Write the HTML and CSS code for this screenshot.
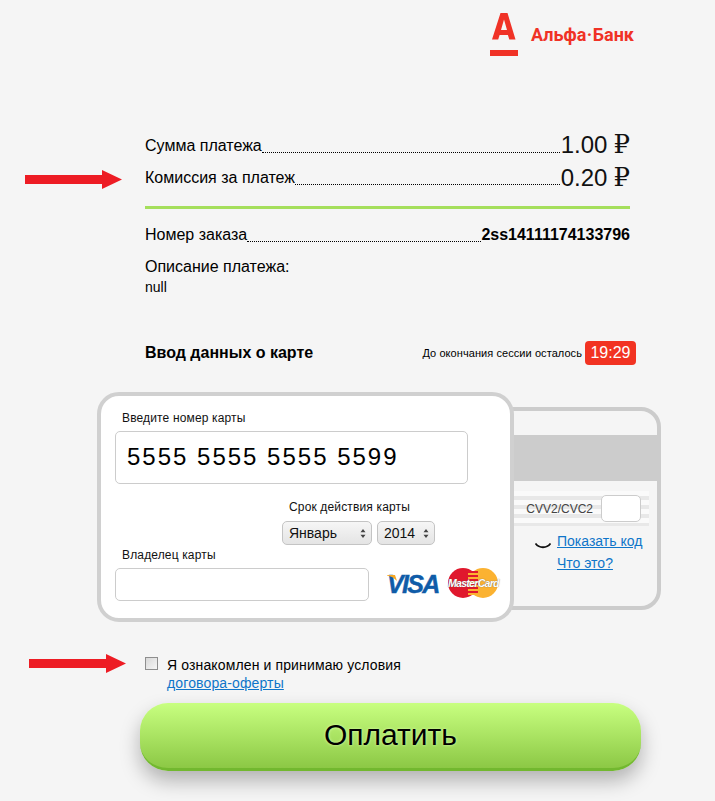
FILE: index.html
```html
<!DOCTYPE html>
<html lang="ru">
<head>
<meta charset="utf-8">
<title>Альфа-Банк</title>
<link rel="stylesheet" href="styles.css">
</head>
<body>
<div class="page">
  <header class="brand">
    <svg class="brand-mark" width="28" height="43" viewBox="0 0 28 43"><path fill="#f03226" d="M10.500 0h7l8 26.500h-6.200l-1.400-4.500H9.600l-1.400 4.500H2zM11 17h6L14 6.500z"/><rect y="37" width="28" height="6" fill="#f03226"/></svg>
    <span class="brand-name">Альфа<span class="brand-dot">·</span>Банк</span>
  </header>

  <section class="summary">
    <div class="row row-amount"><span>Сумма платежа</span><i class="leader"></i><span class="amount">1.00<span class="rub">₽</span></span></div>
    <div class="row row-amount row-fee"><span>Комиссия за платеж</span><i class="leader"></i><span class="amount">0.20<span class="rub">₽</span></span></div>
    <hr class="divider">
    <div class="row row-order"><span>Номер заказа</span><i class="leader"></i><b>2ss14111174133796</b></div>
    <div class="desc-title">Описание платежа:</div>
    <div class="desc-value">null</div>
  </section>

  <section class="card-head">
    <h2>Ввод данных о карте</h2>
    <span class="timer-label">До окончания сессии осталось</span>
    <span class="timer">19:29</span>
  </section>

  <section class="cards">
    <div class="card-front">
      <label class="field-label">Введите номер карты</label>
      <div class="number-input">5555 5555 5555 5599</div>
      <div class="expiry">
        <div class="field-label">Срок действия карты</div>
        <div class="selects">
          <div class="select select-month">Январь<svg width="6" height="9" viewBox="0 0 6 9"><path fill="#444" d="M3 0l2.500 3.300h-5zM3 9L.5 5.700h5z"/></svg></div>
          <div class="select select-year">2014<svg width="6" height="9" viewBox="0 0 6 9"><path fill="#444" d="M3 0l2.500 3.300h-5zM3 9L.5 5.700h5z"/></svg></div>
        </div>
      </div>
      <div class="owner">
        <div class="owner-field">
          <label class="field-label">Владелец карты</label>
          <div class="owner-input"></div>
        </div>
        <div class="visa"><svg class="visa-flag" width="10" height="6" viewBox="0 0 10 6"><path fill="#f5a623" d="M0 0h8l2 6C7 3 4 1.200 0 .6z"/></svg>VISA</div>
        <div class="mc">
          <i class="mc-red"></i><i class="mc-yellow"></i><i class="mc-stripes"></i>
          <span class="mc-text">MasterCard</span>
        </div>
      </div>
    </div>
    <div class="card-back">
      <div class="band"></div>
      <div class="cvv-strip"><span>CVV2/CVC2</span><div class="cvv-input"></div></div>
      <div class="links">
        <svg class="smile" width="16" height="8" viewBox="0 0 16 8"><path d="M.5 1.500C4 6.500 12 6.500 15.500 1.500" fill="none" stroke="#111" stroke-width="1.800"/></svg>
        <div class="link-col">
          <a href="#">Показать код</a>
          <a href="#">Что это?</a>
        </div>
      </div>
    </div>
  </section>

  <section class="agree">
    <span class="check"></span>
    <div class="agree-text">Я ознакомлен и принимаю условия<br><a href="#">договора-оферты</a></div>
  </section>

  <button class="pay">Оплатить</button>

  <svg class="arrow arrow-fee" width="97" height="19" viewBox="0 0 97 19"><path fill="#ed1c24" d="M0 5h77V0l20 9.500L77 19v-5H0z"/></svg>
  <svg class="arrow arrow-agree" width="97" height="19" viewBox="0 0 97 19"><path fill="#ed1c24" d="M0 5h77V0l20 9.500L77 19v-5H0z"/></svg>
</div>
</body>
</html>
```

FILE: styles.css
```css
* { box-sizing: border-box; }
html, body { margin: 0; padding: 0; height: 100%; }
body {
  background: #f5f5f5;
  color: #000;
  font-family: "Liberation Sans", Arial, sans-serif;
  overflow: hidden;
}
a { color: #0f75c9; }
.page { position: relative; width: 715px; height: 801px; }

.brand {
  display: flex;
  align-items: flex-start;
  padding: 13px 0 0 490px;
  height: 125px;
}
.brand-mark { flex: none; }
.brand-name {
  margin: 12px 0 0 13px;
  color: #f03226;
  font-size: 18px;
  line-height: 20px;
  font-weight: 700;
  font-family: "Liberation Sans Narrow", "Roboto", sans-serif;
  white-space: nowrap;
}
.brand-dot { margin: 0 .5px; }

.summary { margin: 0 85px 0 145px; }
.row { display: flex; align-items: flex-end; font-size: 16px; }
.row > span:first-child { margin-bottom: 1px; }
.leader {
  flex: 1;
  border-bottom: 1px dotted #000;
  margin: 0 1px 4px 0;
}
.row-amount { height: 32px; line-height: 20px; }
.amount {
  display: flex;
  align-items: baseline;
  margin-bottom: -2px;
  font-size: 24px;
  line-height: 28px;
  color: #111;
}
.row-fee .amount { margin-bottom: -3px; }
.rub { margin-left: 6px; font-family: "Liberation Serif", "DejaVu Serif", serif; font-size: 26px; line-height: 28px; }
.divider { height: 3px; border: 0; margin: 17px 0 0; background: #a5df5c; }
.row-order { margin-top: 16px; line-height: 20px; }
.row-order b { margin-bottom: 1px; }
.row-order .leader { margin-right: 0; }
.desc-title { margin-top: 11px; font-size: 16px; line-height: 20px; }
.desc-value { font-size: 14px; line-height: 20px; }

.card-head {
  display: flex;
  align-items: center;
  margin: 44px 79px 0 145px;
  height: 24px;
}
.card-head h2 { margin: 0; flex: 1; font-size: 16px; font-weight: 700; }
.timer-label { font-size: 11px; letter-spacing: .07px; margin-right: 3px; }
.timer {
  width: 51px;
  height: 24px;
  border-radius: 4px;
  background: #f23322;
  color: #fff;
  font-size: 16px;
  line-height: 24px;
  text-align: center;
}

.cards {
  display: grid;
  grid-template-columns: 417px 147px;
  margin: 27px 0 0 97px;
}
.card-front {
  grid-column: 1;
  grid-row: 1;
  z-index: 1;
  height: 230px;
  border: 4px solid #d0d0d0;
  border-radius: 22px;
  background: #fff;
  padding: 15px 0 0 14px;
}
.field-label { display: block; font-size: 12px; line-height: 14px; letter-spacing: .15px; color: #111; padding-left: 7px; }
.number-input {
  width: 353px;
  height: 53px;
  margin-top: 6px;
  padding-left: 11px;
  border: 1px solid #ccc;
  border-radius: 5px;
  font-size: 24px;
  letter-spacing: 2px;
  line-height: 50px;
  color: #000;
}
.expiry { margin: 16px 0 0 167px; }
.selects { display: flex; gap: 5px; margin-top: 7px; }
.select {
  display: flex;
  align-items: center;
  justify-content: space-between;
  height: 24px;
  padding: 0 5px 0 6px;
  border: 1px solid #c4c4c4;
  border-radius: 5px;
  background: linear-gradient(#f6f6f6, #e4e4e4);
  font-size: 14px;
  color: #111;
}
.select-month { width: 90px; }
.select-year { width: 58px; }
.owner { display: flex; align-items: flex-end; margin-top: 3px; }
.owner-field { width: 254px; }
.owner-input {
  width: 254px;
  height: 33px;
  margin-top: 6px;
  border: 1px solid #ccc;
  border-radius: 5px;
  background: #fff;
}
.visa {
  position: relative;
  width: 52px;
  margin: 0 0 4px 18px;
  color: #0f5ca8;
  font-size: 25px;
  line-height: 26px;
  font-weight: 700;
  font-style: italic;
  letter-spacing: -1.700px;
  -webkit-text-stroke: .4px #0f5ca8;
}
.visa-flag { position: absolute; left: 0; top: 4px; }
.mc { position: relative; width: 50px; height: 30px; margin: 0 0 3px 9px; }
.mc i { position: absolute; top: 0; width: 30px; height: 30px; border-radius: 50%; }
.mc-red { left: 0; background: #e0182d; }
.mc-yellow { right: 0; background: #fbb231; }
.mc .mc-stripes {
  left: 20px;
  top: 3px;
  width: 10px;
  height: 24px;
  border-radius: 0;
  background: repeating-linear-gradient(#e0182d 0 2px, #fbb231 2px 4px);
}
.mc-text {
  position: absolute;
  left: 0;
  top: 9px;
  width: 50px;
  font-size: 10.500px;
  line-height: 12px;
  font-weight: 700;
  font-style: italic;
  letter-spacing: -.7px;
  color: #fff;
  text-align: center;
  white-space: nowrap;
  text-shadow: 0 0 1px #555;
}

.card-back {
  grid-column: 1 / 3;
  grid-row: 1;
  margin: 15px 0 12px 330px;
  height: 203px;
  border: 4px solid #ccc;
  border-radius: 20px;
  padding-top: 24px;
  overflow: hidden;
}
.band { height: 46px; background: #ccc; }
.cvv-strip {
  display: flex;
  align-items: center;
  justify-content: flex-end;
  gap: 8px;
  height: 35px;
  margin: 10px 8px 0 0;
  padding-right: 8px;
  background: repeating-linear-gradient(#fafafa 0 5px, #e8e8e8 5px 9px);
  font-size: 12px;
  color: #444;
}
.cvv-input { width: 40px; height: 27px; border: 1px solid #ccc; border-radius: 5px; background: #fff; }
.links { display: flex; margin: 4px 0 0 104px; font-size: 14px; }
.smile { margin: 12px 6px 0 0; flex: none; }
.link-col { display: flex; flex-direction: column; line-height: 22px; white-space: nowrap; }

.agree { display: flex; margin: 34px 0 0 145px; font-size: 14px; line-height: 18px; letter-spacing: .13px; }
.check {
  flex: none;
  width: 13px;
  height: 13px;
  margin: 1px 9px 0 0;
  border: 1px solid #8e8e8e;
  background: linear-gradient(135deg, #d8d8d8, #f6f6f6);
}

.pay {
  display: block;
  width: 501px;
  height: 68px;
  margin: 11px 0 0 140px;
  padding: 0 0 1px;
  border: 0;
  border-bottom: 3px solid #72b82f;
  border-radius: 28px;
  background: linear-gradient(#c8ff80, #8cc845);
  box-shadow: 0 10px 20px rgba(0,0,0,.28);
  color: #000;
  font-family: inherit;
  font-size: 30px;
  text-shadow: 0 0 3px #dcffb0;
}

.arrow { position: absolute; }
.arrow-fee { left: 25px; top: 170px; }
.arrow-agree { left: 29px; top: 654px; }
```
